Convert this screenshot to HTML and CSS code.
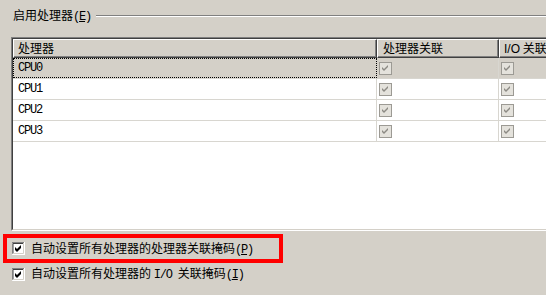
FILE: index.html
```html
<!DOCTYPE html>
<html lang="zh-CN">
<head>
<meta charset="utf-8">
<link rel="stylesheet" href="styles.css">
</head>
<body>
<div class="page">
  <div class="group-title">
    <span class="gt">启用处理器<span class="mono">(<u>E</u>)</span></span>
    <span class="gline"></span>
  </div>
  <div class="list">
    <div class="list-inner">
      <div class="hdr">
        <div class="hc c1">处理器</div>
        <div class="hc c2">处理器关联</div>
        <div class="hc c3"><span class="sans">I/O</span> 关联</div>
      </div>
      <div class="row sel">
        <div class="cell c1 focus"><span class="mono">CPU0</span></div>
        <div class="cell c2"><svg class="gcb" viewBox="0 0 13 13"><rect x="0.5" y="0.5" width="12" height="12" fill="#e4e2dc" stroke="#9c9a94"/><polygon points="3,5 5,7 9,3 9,5 5,9 3,7" fill="#8c8a84"/></svg></div>
        <div class="cell c3"><svg class="gcb" viewBox="0 0 13 13"><rect x="0.5" y="0.5" width="12" height="12" fill="#e4e2dc" stroke="#9c9a94"/><polygon points="3,5 5,7 9,3 9,5 5,9 3,7" fill="#8c8a84"/></svg></div>
      </div>
      <div class="row">
        <div class="cell c1"><span class="mono">CPU1</span></div>
        <div class="cell c2"><svg class="gcb" viewBox="0 0 13 13"><rect x="0.5" y="0.5" width="12" height="12" fill="#e4e2dc" stroke="#9c9a94"/><polygon points="3,5 5,7 9,3 9,5 5,9 3,7" fill="#8c8a84"/></svg></div>
        <div class="cell c3"><svg class="gcb" viewBox="0 0 13 13"><rect x="0.5" y="0.5" width="12" height="12" fill="#e4e2dc" stroke="#9c9a94"/><polygon points="3,5 5,7 9,3 9,5 5,9 3,7" fill="#8c8a84"/></svg></div>
      </div>
      <div class="row">
        <div class="cell c1"><span class="mono">CPU2</span></div>
        <div class="cell c2"><svg class="gcb" viewBox="0 0 13 13"><rect x="0.5" y="0.5" width="12" height="12" fill="#e4e2dc" stroke="#9c9a94"/><polygon points="3,5 5,7 9,3 9,5 5,9 3,7" fill="#8c8a84"/></svg></div>
        <div class="cell c3"><svg class="gcb" viewBox="0 0 13 13"><rect x="0.5" y="0.5" width="12" height="12" fill="#e4e2dc" stroke="#9c9a94"/><polygon points="3,5 5,7 9,3 9,5 5,9 3,7" fill="#8c8a84"/></svg></div>
      </div>
      <div class="row">
        <div class="cell c1"><span class="mono">CPU3</span></div>
        <div class="cell c2"><svg class="gcb" viewBox="0 0 13 13"><rect x="0.5" y="0.5" width="12" height="12" fill="#e4e2dc" stroke="#9c9a94"/><polygon points="3,5 5,7 9,3 9,5 5,9 3,7" fill="#8c8a84"/></svg></div>
        <div class="cell c3"><svg class="gcb" viewBox="0 0 13 13"><rect x="0.5" y="0.5" width="12" height="12" fill="#e4e2dc" stroke="#9c9a94"/><polygon points="3,5 5,7 9,3 9,5 5,9 3,7" fill="#8c8a84"/></svg></div>
      </div>
    </div>
  </div>
  <div class="hl">
    <div class="opt">
      <svg class="cb" viewBox="0 0 13 13"><rect x="0" y="0" width="13" height="13" fill="#fff"/><path d="M0 12.5V0.5H12.5" fill="none" stroke="#808080"/><path d="M1 11.5V1.5H11.5" fill="none" stroke="#404040"/><path d="M0.5 13V12.5H12.5V0" fill="none" stroke="#fff"/><path d="M1.5 12V11.5H11.5V1" fill="none" stroke="#d4d0c8"/><polygon points="3,5 5,7 9,3 9,6 5,10 3,8" fill="#000"/></svg>
      <span class="lbl">自动设置所有处理器的处理器关联掩码<span class="mono">(<u>P</u>)</span></span>
    </div>
  </div>
  <div class="opt opt2">
    <svg class="cb" viewBox="0 0 13 13"><rect x="0" y="0" width="13" height="13" fill="#fff"/><path d="M0 12.5V0.5H12.5" fill="none" stroke="#808080"/><path d="M1 11.5V1.5H11.5" fill="none" stroke="#404040"/><path d="M0.5 13V12.5H12.5V0" fill="none" stroke="#fff"/><path d="M1.5 12V11.5H11.5V1" fill="none" stroke="#d4d0c8"/><polygon points="3,5 5,7 9,3 9,6 5,10 3,8" fill="#000"/></svg>
    <span class="lbl">自动设置所有处理器的 <span class="mono">I/O </span>关联掩码<span class="mono">(<u>I</u>)</span></span>
  </div>
</div>
</body>
</html>
```
FILE: styles.css
```css
html, body {
  margin: 0;
  padding: 0;
}
body {
  width: 546px;
  height: 295px;
  overflow: hidden;
  background: #d4d0c8;
  font-family: "Noto Sans CJK SC", "Noto Sans", sans-serif;
  font-size: 12px;
  color: #000;
}
.page {
  display: flex;
  flex-direction: column;
  width: 546px;
  height: 295px;
  overflow: hidden;
}
.mono {
  font-family: "Liberation Mono", "DejaVu Sans Mono", monospace;
  font-size: 12px;
  letter-spacing: -1.2px;
}
.sans {
  font-family: "Liberation Sans", Arial, sans-serif;
  font-size: 12px;
}
.group-title {
  display: flex;
  align-items: center;
  height: 16px;
  padding-top: 8px;
  padding-left: 13px;
}
.gt {
  line-height: 16px;
  white-space: nowrap;
  margin-right: 5px;
}
.gline {
  flex: 1;
  height: 0;
  border-top: 1px solid #808080;
  border-bottom: 1px solid #fff;
}
.list {
  margin-top: 13px;
  margin-left: 11px;
  margin-right: -60px;
  height: 194px;
  box-sizing: border-box;
  border-top: 1px solid #808080;
  border-left: 1px solid #808080;
  border-bottom: 1px solid #fff;
  border-right: 1px solid #fff;
  overflow: hidden;
}
.list-inner {
  height: 100%;
  box-sizing: border-box;
  border-top: 1px solid #404040;
  border-left: 1px solid #404040;
  border-bottom: 1px solid #d4d0c8;
  border-right: 1px solid #d4d0c8;
  background: #fff;
  display: flex;
  flex-direction: column;
}
.hdr {
  display: flex;
  height: 19px;
  flex: none;
}
.hc {
  box-sizing: border-box;
  height: 19px;
  background: #d4d0c8;
  border-top: 1px solid #fff;
  border-left: 1px solid #fff;
  border-right: 1px solid #404040;
  border-bottom: 1px solid #404040;
  box-shadow: inset -1px -1px 0 #808080;
  padding-left: 4px;
  line-height: 16px;
  white-space: nowrap;
}
.c1 { width: 364px; flex: none; }
.c2 { width: 122px; flex: none; }
.c3 { flex: 1; }
.hc.c2 { padding-left: 5px; }
.row {
  display: flex;
  height: 21px;
  flex: none;
  box-sizing: border-box;
  border-bottom: 1px solid #d8d6d0;
}
.row.sel {
  background: #d4d0c8;
}
.cell {
  box-sizing: border-box;
  height: 20px;
  border-right: 1px solid #d8d6d0;
  display: flex;
  align-items: center;
}
.cell.c1 {
  padding-left: 5px;
}
.cell.focus {
  outline: 1px dotted #000;
  outline-offset: -1px;
}
.cell.c2, .cell.c3 {
  padding-left: 2px;
}
.gcb {
  width: 13px;
  height: 13px;
  display: block;
}
.hl {
  margin-top: 3px;
  margin-left: 3px;
  width: 280px;
  height: 29px;
  flex: none;
  box-sizing: border-box;
  border: 4px solid #f00;
  display: flex;
  align-items: center;
}
.opt {
  display: flex;
  align-items: center;
  gap: 6px;
  padding-left: 5px;
  height: 21px;
}
.opt2 {
  padding-left: 12px;
  margin-top: 2px;
  height: 18px;
}
.cb {
  width: 13px;
  height: 13px;
  display: block;
  flex: none;
}
.lbl {
  line-height: 16px;
  white-space: nowrap;
}
```
